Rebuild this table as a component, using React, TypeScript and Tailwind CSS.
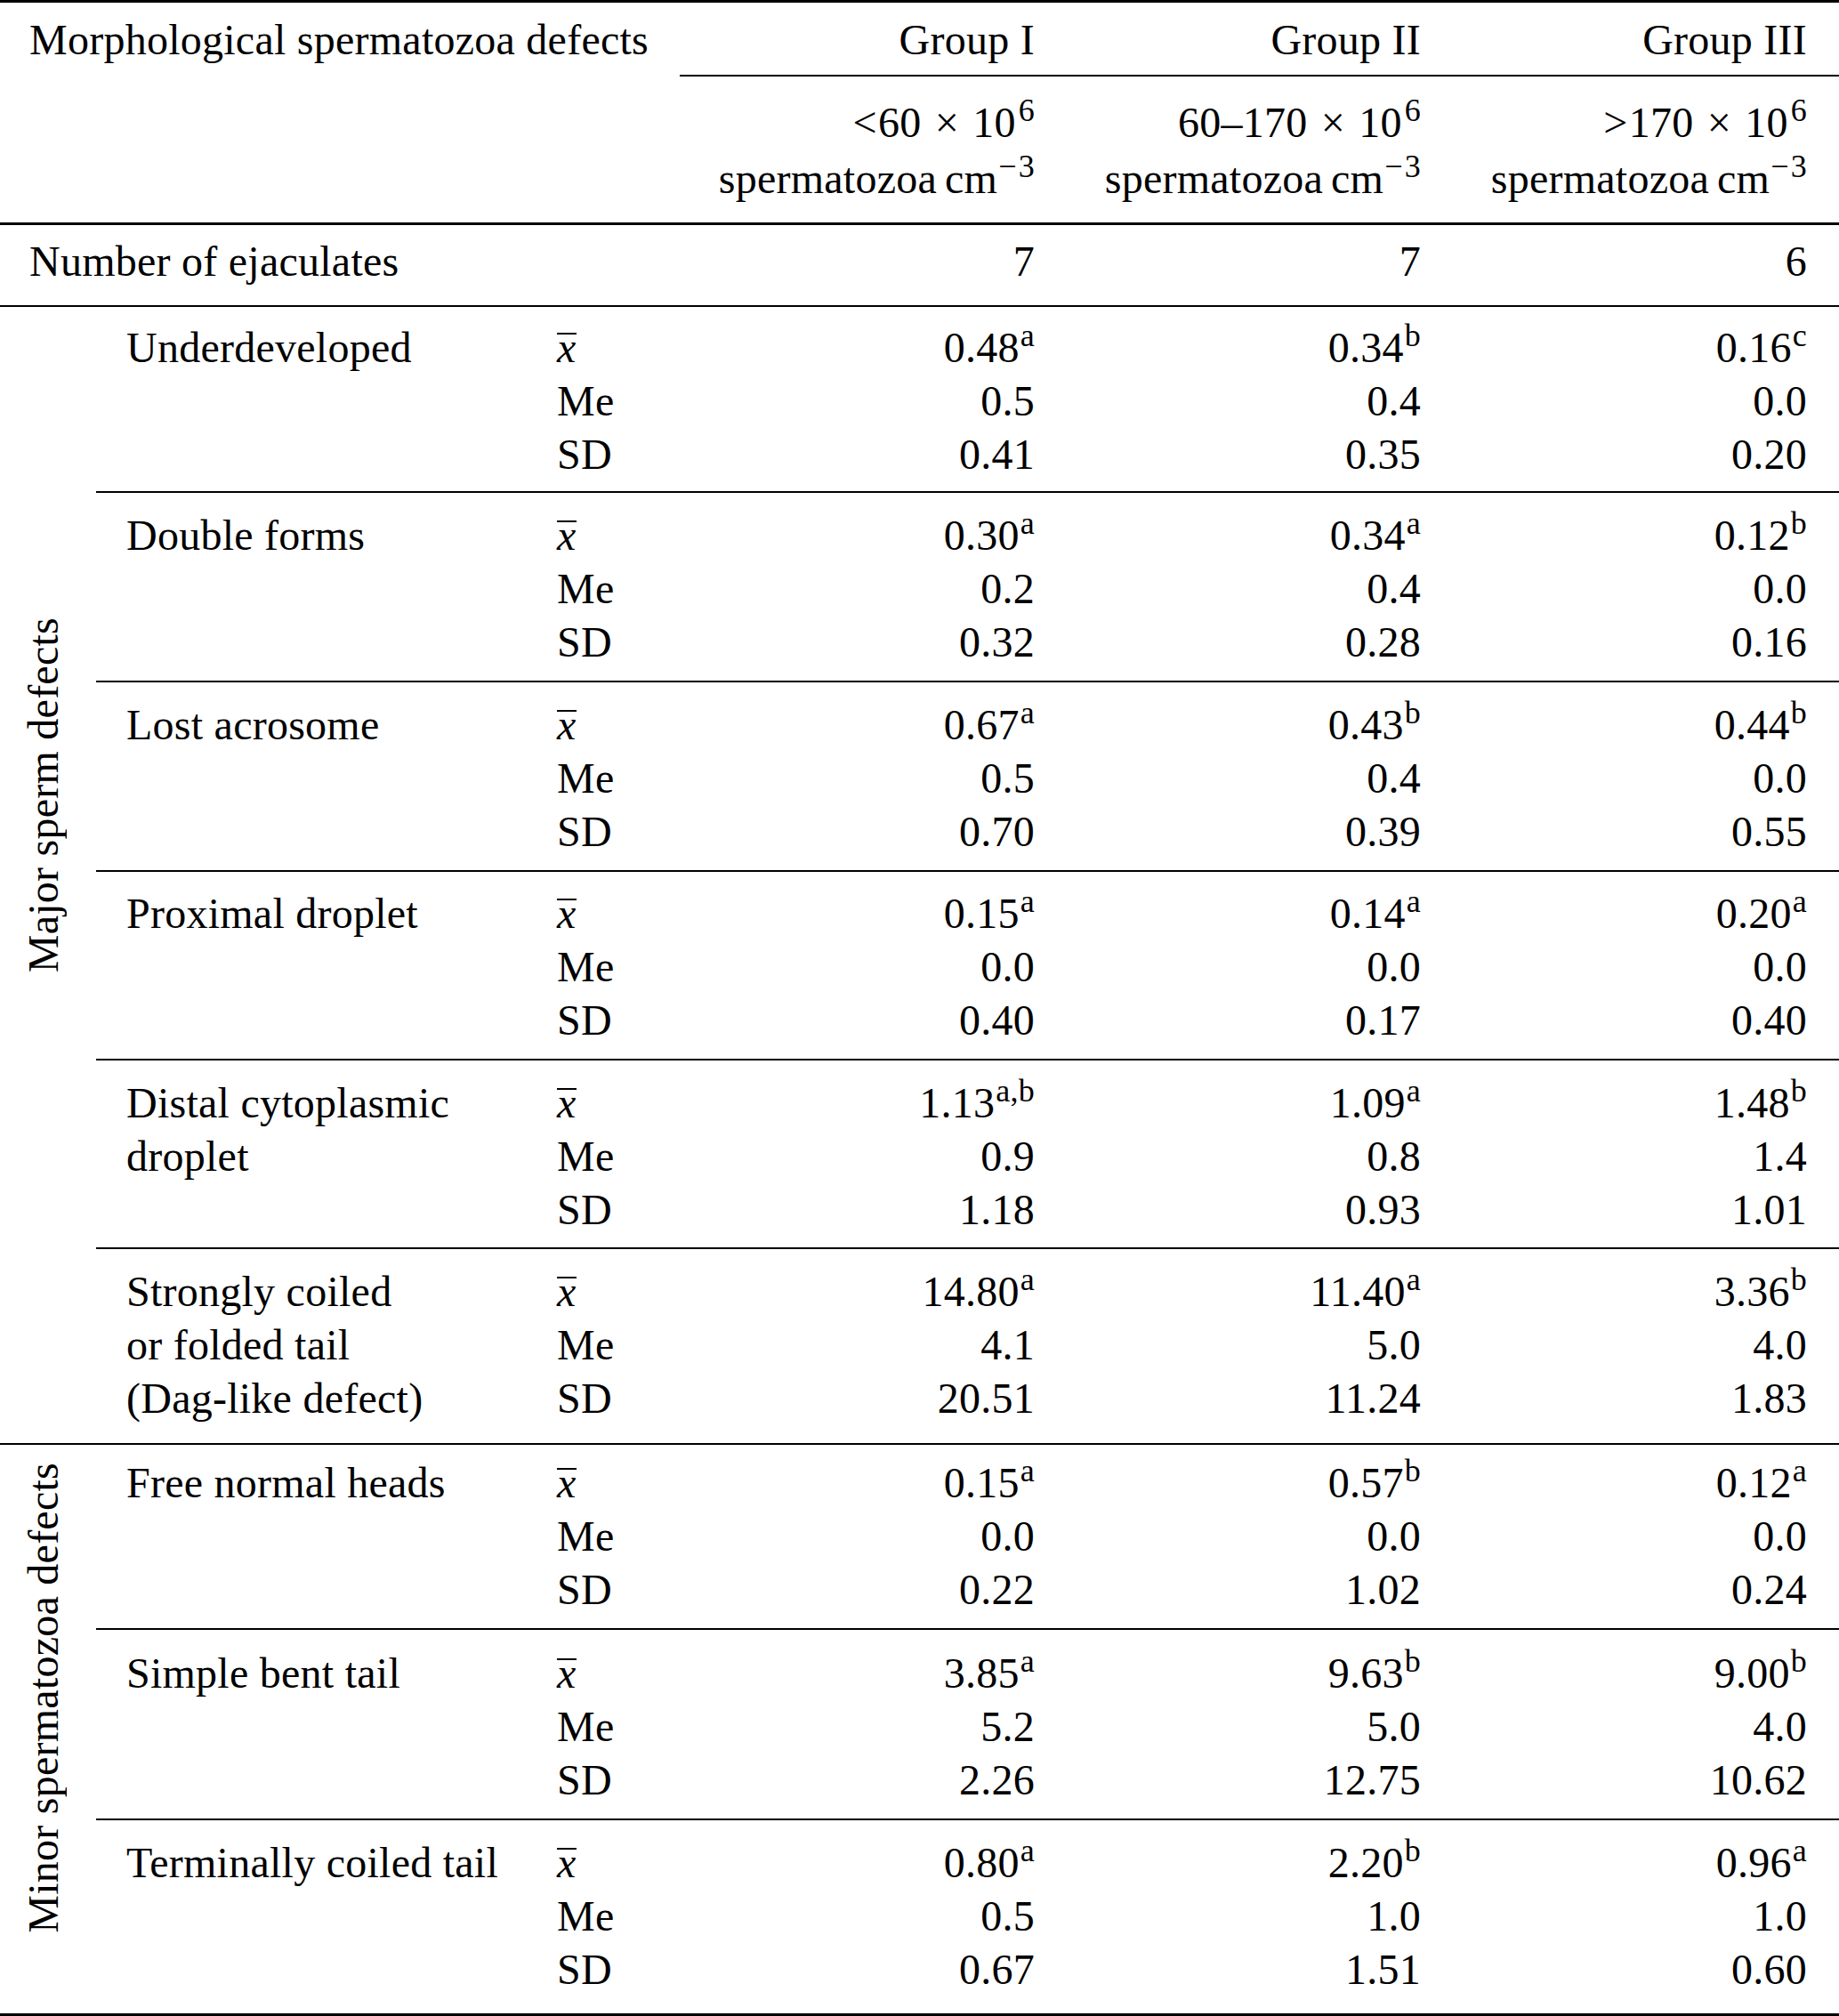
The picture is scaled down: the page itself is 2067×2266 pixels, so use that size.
import React from 'react';

type Cell = [string, string?];

interface Defect {
  name: string[];
  mean: Cell[];
  me: string[];
  sd: string[];
  pad: string;
  ruled: boolean;
}

const MAJOR: Defect[] = [
  { name: ['Underdeveloped'], mean: [['0.48', 'a'], ['0.34', 'b'], ['0.16', 'c']], me: ['0.5', '0.4', '0.0'], sd: ['0.41', '0.35', '0.20'], pad: 'pt-[16px] pb-[11px]', ruled: false },
  { name: ['Double forms'], mean: [['0.30', 'a'], ['0.34', 'a'], ['0.12', 'b']], me: ['0.2', '0.4', '0.0'], sd: ['0.32', '0.28', '0.16'], pad: 'pt-[18px] pb-[13px]', ruled: true },
  { name: ['Lost acrosome'], mean: [['0.67', 'a'], ['0.43', 'b'], ['0.44', 'b']], me: ['0.5', '0.4', '0.0'], sd: ['0.70', '0.39', '0.55'], pad: 'pt-[18px] pb-[13px]', ruled: true },
  { name: ['Proximal droplet'], mean: [['0.15', 'a'], ['0.14', 'a'], ['0.20', 'a']], me: ['0.0', '0.0', '0.0'], sd: ['0.40', '0.17', '0.40'], pad: 'pt-[17px] pb-[13px]', ruled: true },
  { name: ['Distal cytoplasmic', 'droplet'], mean: [['1.13', 'a,b'], ['1.09', 'a'], ['1.48', 'b']], me: ['0.9', '0.8', '1.4'], sd: ['1.18', '0.93', '1.01'], pad: 'pt-[18px] pb-[12px]', ruled: true },
  { name: ['Strongly coiled', 'or folded tail', '(Dag-like defect)'], mean: [['14.80', 'a'], ['11.40', 'a'], ['3.36', 'b']], me: ['4.1', '5.0', '4.0'], sd: ['20.51', '11.24', '1.83'], pad: 'pt-[18px] pb-[20px]', ruled: true },
];

const MINOR: Defect[] = [
  { name: ['Free normal heads'], mean: [['0.15', 'a'], ['0.57', 'b'], ['0.12', 'a']], me: ['0.0', '0.0', '0.0'], sd: ['0.22', '1.02', '0.24'], pad: 'pt-[13px] pb-[13px]', ruled: false },
  { name: ['Simple bent tail'], mean: [['3.85', 'a'], ['9.63', 'b'], ['9.00', 'b']], me: ['5.2', '5.0', '4.0'], sd: ['2.26', '12.75', '10.62'], pad: 'pt-[19px] pb-[13px]', ruled: true },
  { name: ['Terminally coiled tail'], mean: [['0.80', 'a'], ['2.20', 'b'], ['0.96', 'a']], me: ['0.5', '1.0', '1.0'], sd: ['0.67', '1.51', '0.60'], pad: 'pt-[18px] pb-[19px]', ruled: true },
];

// value columns: right edges land at 1163 / 1597 / 2031
const colClass = ['w-[434px] pr-[35px]', 'w-[434px] pr-[35px]', 'flex-1 pr-[36px]'];

const XBar = () => (
  <span className="inline-block border-t-2 border-black leading-[29px] italic">x</span>
);

const DefectBlock = ({ d }: { d: Defect }) => (
  <div className={`flex ${d.pad} ${d.ruled ? 'border-t-2 border-black' : ''}`}>
    <div className="w-[518px] pl-[34px]">
      {d.name.map(line => (
        <div key={line}>{line}</div>
      ))}
    </div>
    <div className="w-[138px]">
      <div><XBar /></div>
      <div>Me</div>
      <div>SD</div>
    </div>
    {[0, 1, 2].map(i => (
      <div key={i} className={`${colClass[i]} text-right`}>
        <div>
          {d.mean[i][0]}
          <sup className="text-[36px] ml-[1px]">{d.mean[i][1]}</sup>
        </div>
        <div>{d.me[i]}</div>
        <div>{d.sd[i]}</div>
      </div>
    ))}
  </div>
);

const Section = ({ label, items, shift }: { label: string; items: Defect[]; shift: string }) => (
  <div className="flex border-t-2 border-black">
    <div className={`w-[108px] flex items-center pl-[19px] ${shift}`}>
      <span className="[writing-mode:vertical-rl] rotate-180 whitespace-nowrap">{label}</span>
    </div>
    <div className="flex-1">
      {items.map(d => (
        <DefectBlock key={d.name[0]} d={d} />
      ))}
    </div>
  </div>
);

const Range = ({ sign, value }: { sign?: string; value: string }) => (
  <>
    {sign && <span className="mr-[1px]">{sign}</span>}
    {value}
    <span className="px-[3px]"> × </span>
    10
    <sup className="text-[36px] ml-[3px]">6</sup>
  </>
);

export default function App() {
  const groups = ['Group I', 'Group II', 'Group III'];
  const ranges = [
    <Range sign="<" value="60" />,
    <Range value="60–170" />,
    <Range sign=">" value="170" />,
  ];
  const counts = ['7', '7', '6'];

  return (
    <div className="w-[2067px] bg-white text-black font-['Liberation_Serif','Times_New_Roman',serif] text-[48px] leading-[60px] tracking-[0.25px]">
      {/* Header */}
      <div className="flex border-t-[3px] border-b-[3px] border-black">
        <div className="w-[764px] pl-[33px] pt-[12px]">Morphological spermatozoa defects</div>
        <div className="flex-1">
          <div className="flex pt-[12px] pb-[9px] border-b-2 border-black">
            {groups.map((g, i) => (
              <div key={g} className={`${colClass[i]} text-right`}>{g}</div>
            ))}
          </div>
          <div className="flex pt-[20px] pb-[18px] leading-[63px]">
            {ranges.map((r, i) => (
              <div key={i} className={`${colClass[i]} text-right`}>
                <div>{r}</div>
                <div>
                  spermatozoa<span className="ml-[9px]">cm</span>
                  <sup className="text-[36px] ml-[1px]">
                    <span className="mr-[2px]">−</span>3
                  </sup>
                </div>
              </div>
            ))}
          </div>
        </div>
      </div>

      {/* Number of ejaculates */}
      <div className="flex pt-[11px] pb-[19px]">
        <div className="w-[764px] pl-[33px]">Number of ejaculates</div>
        {counts.map((c, i) => (
          <div key={i} className={`${colClass[i]} text-right`}>{c}</div>
        ))}
      </div>

      <Section label="Major sperm defects" items={MAJOR} shift="pb-[180px]" />
      <Section label="Minor spermatozoa defects" items={MINOR} shift="pb-[71px]" />
      <div className="border-t-[3px] border-black" />
    </div>
  );
}
